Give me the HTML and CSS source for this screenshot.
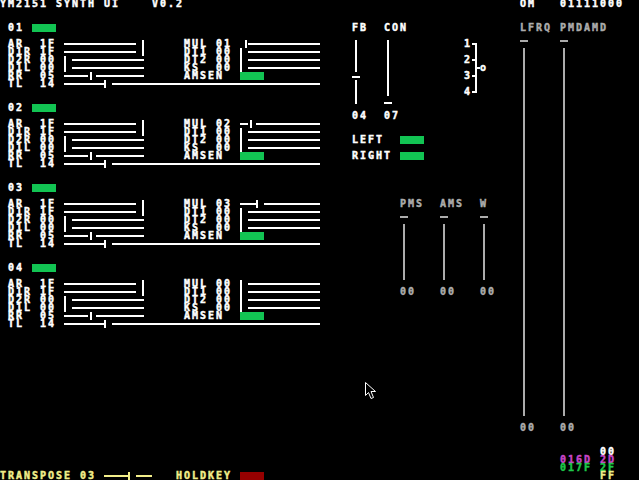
FILE: index.html
```html
<!DOCTYPE html>
<html lang="en">
<head>
	<meta charset="UTF-8">
	<title>YM2151 SYNTH UI</title>
	<link rel="stylesheet" href="styles.css">
</head>
<body>
	<div class="screen">
		<div class="title">YM2151 SYNTH UI    V0.2</div>

		<!-- operators -->
		<div class="ops">
			<div class="op">
				<div class="op-head"><span class="num">01</span><span class="led"></span></div>
				<div class="params">
					<span class="lbl">AR</span><span>1F</span>
					<div class="hs a"><i class="trk" style="width:72px"></i><b class="cell"><i class="knob" style="margin-left:6px"></i></b><i class="trk rest"></i></div>
					<span class="lbl b">MUL</span><span>01</span>
					<div class="hs b"><i class="trk" style="width:0px"></i><b class="cell"><i class="knob" style="margin-left:5px"></i></b><i class="trk rest"></i></div>

					<span class="lbl">D1R</span><span>1F</span>
					<div class="hs a"><i class="trk" style="width:72px"></i><b class="cell"><i class="knob" style="margin-left:6px"></i></b><i class="trk rest"></i></div>
					<span class="lbl b">DT1</span><span>00</span>
					<div class="hs b"><i class="trk" style="width:0px"></i><b class="cell"><i class="knob"></i></b><i class="trk rest"></i></div>

					<span class="lbl">D2R</span><span>00</span>
					<div class="hs a"><i class="trk" style="width:0px"></i><b class="cell"><i class="knob"></i></b><i class="trk rest"></i></div>
					<span class="lbl b">DT2</span><span>00</span>
					<div class="hs b"><i class="trk" style="width:0px"></i><b class="cell"><i class="knob"></i></b><i class="trk rest"></i></div>

					<span class="lbl">D1L</span><span>00</span>
					<div class="hs a"><i class="trk" style="width:0px"></i><b class="cell"><i class="knob"></i></b><i class="trk rest"></i></div>
					<span class="lbl b">KS</span><span>00</span>
					<div class="hs b"><i class="trk" style="width:0px"></i><b class="cell"><i class="knob"></i></b><i class="trk rest"></i></div>

					<span class="lbl">RR</span><span>05</span>
					<div class="hs a"><i class="trk" style="width:24px"></i><b class="cell"><i class="knob" style="margin-left:2px"></i></b><i class="trk rest"></i></div>
					<span class="lbl amsen">AMSEN</span><span class="led"></span>

					<span class="lbl">TL</span><span>14</span>
					<div class="hs wide"><i class="trk" style="width:40px"></i><b class="cell"><i class="knob"></i></b><i class="trk rest"></i></div>
				</div>
			</div>

			<div class="op">
				<div class="op-head"><span class="num">02</span><span class="led"></span></div>
				<div class="params">
					<span class="lbl">AR</span><span>1F</span>
					<div class="hs a"><i class="trk" style="width:72px"></i><b class="cell"><i class="knob" style="margin-left:6px"></i></b><i class="trk rest"></i></div>
					<span class="lbl b">MUL</span><span>02</span>
					<div class="hs b"><i class="trk" style="width:8px"></i><b class="cell"><i class="knob" style="margin-left:2px"></i></b><i class="trk rest"></i></div>

					<span class="lbl">D1R</span><span>1F</span>
					<div class="hs a"><i class="trk" style="width:72px"></i><b class="cell"><i class="knob" style="margin-left:6px"></i></b><i class="trk rest"></i></div>
					<span class="lbl b">DT1</span><span>00</span>
					<div class="hs b"><i class="trk" style="width:0px"></i><b class="cell"><i class="knob"></i></b><i class="trk rest"></i></div>

					<span class="lbl">D2R</span><span>00</span>
					<div class="hs a"><i class="trk" style="width:0px"></i><b class="cell"><i class="knob"></i></b><i class="trk rest"></i></div>
					<span class="lbl b">DT2</span><span>00</span>
					<div class="hs b"><i class="trk" style="width:0px"></i><b class="cell"><i class="knob"></i></b><i class="trk rest"></i></div>

					<span class="lbl">D1L</span><span>00</span>
					<div class="hs a"><i class="trk" style="width:0px"></i><b class="cell"><i class="knob"></i></b><i class="trk rest"></i></div>
					<span class="lbl b">KS</span><span>00</span>
					<div class="hs b"><i class="trk" style="width:0px"></i><b class="cell"><i class="knob"></i></b><i class="trk rest"></i></div>

					<span class="lbl">RR</span><span>05</span>
					<div class="hs a"><i class="trk" style="width:24px"></i><b class="cell"><i class="knob" style="margin-left:2px"></i></b><i class="trk rest"></i></div>
					<span class="lbl amsen">AMSEN</span><span class="led"></span>

					<span class="lbl">TL</span><span>14</span>
					<div class="hs wide"><i class="trk" style="width:40px"></i><b class="cell"><i class="knob"></i></b><i class="trk rest"></i></div>
				</div>
			</div>

			<div class="op">
				<div class="op-head"><span class="num">03</span><span class="led"></span></div>
				<div class="params">
					<span class="lbl">AR</span><span>1F</span>
					<div class="hs a"><i class="trk" style="width:72px"></i><b class="cell"><i class="knob" style="margin-left:6px"></i></b><i class="trk rest"></i></div>
					<span class="lbl b">MUL</span><span>03</span>
					<div class="hs b"><i class="trk" style="width:16px"></i><b class="cell"><i class="knob"></i></b><i class="trk rest"></i></div>

					<span class="lbl">D1R</span><span>1F</span>
					<div class="hs a"><i class="trk" style="width:72px"></i><b class="cell"><i class="knob" style="margin-left:6px"></i></b><i class="trk rest"></i></div>
					<span class="lbl b">DT1</span><span>00</span>
					<div class="hs b"><i class="trk" style="width:0px"></i><b class="cell"><i class="knob"></i></b><i class="trk rest"></i></div>

					<span class="lbl">D2R</span><span>00</span>
					<div class="hs a"><i class="trk" style="width:0px"></i><b class="cell"><i class="knob"></i></b><i class="trk rest"></i></div>
					<span class="lbl b">DT2</span><span>00</span>
					<div class="hs b"><i class="trk" style="width:0px"></i><b class="cell"><i class="knob"></i></b><i class="trk rest"></i></div>

					<span class="lbl">D1L</span><span>00</span>
					<div class="hs a"><i class="trk" style="width:0px"></i><b class="cell"><i class="knob"></i></b><i class="trk rest"></i></div>
					<span class="lbl b">KS</span><span>00</span>
					<div class="hs b"><i class="trk" style="width:0px"></i><b class="cell"><i class="knob"></i></b><i class="trk rest"></i></div>

					<span class="lbl">RR</span><span>05</span>
					<div class="hs a"><i class="trk" style="width:24px"></i><b class="cell"><i class="knob" style="margin-left:2px"></i></b><i class="trk rest"></i></div>
					<span class="lbl amsen">AMSEN</span><span class="led"></span>

					<span class="lbl">TL</span><span>14</span>
					<div class="hs wide"><i class="trk" style="width:40px"></i><b class="cell"><i class="knob"></i></b><i class="trk rest"></i></div>
				</div>
			</div>

			<div class="op">
				<div class="op-head"><span class="num">04</span><span class="led"></span></div>
				<div class="params">
					<span class="lbl">AR</span><span>1F</span>
					<div class="hs a"><i class="trk" style="width:72px"></i><b class="cell"><i class="knob" style="margin-left:6px"></i></b><i class="trk rest"></i></div>
					<span class="lbl b">MUL</span><span>00</span>
					<div class="hs b"><i class="trk" style="width:0px"></i><b class="cell"><i class="knob"></i></b><i class="trk rest"></i></div>

					<span class="lbl">D1R</span><span>1F</span>
					<div class="hs a"><i class="trk" style="width:72px"></i><b class="cell"><i class="knob" style="margin-left:6px"></i></b><i class="trk rest"></i></div>
					<span class="lbl b">DT1</span><span>00</span>
					<div class="hs b"><i class="trk" style="width:0px"></i><b class="cell"><i class="knob"></i></b><i class="trk rest"></i></div>

					<span class="lbl">D2R</span><span>00</span>
					<div class="hs a"><i class="trk" style="width:0px"></i><b class="cell"><i class="knob"></i></b><i class="trk rest"></i></div>
					<span class="lbl b">DT2</span><span>00</span>
					<div class="hs b"><i class="trk" style="width:0px"></i><b class="cell"><i class="knob"></i></b><i class="trk rest"></i></div>

					<span class="lbl">D1L</span><span>00</span>
					<div class="hs a"><i class="trk" style="width:0px"></i><b class="cell"><i class="knob"></i></b><i class="trk rest"></i></div>
					<span class="lbl b">KS</span><span>00</span>
					<div class="hs b"><i class="trk" style="width:0px"></i><b class="cell"><i class="knob"></i></b><i class="trk rest"></i></div>

					<span class="lbl">RR</span><span>05</span>
					<div class="hs a"><i class="trk" style="width:24px"></i><b class="cell"><i class="knob" style="margin-left:2px"></i></b><i class="trk rest"></i></div>
					<span class="lbl amsen">AMSEN</span><span class="led"></span>

					<span class="lbl">TL</span><span>14</span>
					<div class="hs wide"><i class="trk" style="width:40px"></i><b class="cell"><i class="knob"></i></b><i class="trk rest"></i></div>
				</div>
			</div>
		</div>

		<!-- feedback / connection -->
		<div class="fbcon">
			<div class="meter">
				<span>FB</span>
				<div class="vs short"><i class="vtrk" style="height:32px"></i><b class="vcell"><i class="vknob" style="margin-top:4px"></i></b><i class="vtrk rest"></i></div>
				<span>04</span>
			</div>
			<div class="meter">
				<span>CON</span>
				<div class="vs short"><i class="vtrk" style="height:56px"></i><b class="vcell"><i class="vknob" style="margin-top:6px"></i></b><i class="vtrk rest"></i></div>
				<span>07</span>
			</div>
		</div>

		<!-- algorithm -->
		<div class="alg">
			<div class="alg-nums"><span>1</span><span>2</span><span>3</span><span>4</span></div>
			<svg class="alg-lines" width="8" height="56" viewBox="0 0 8 56">
				<rect x="0" y="3" width="5" height="2" fill="#fff"/>
				<rect x="0" y="19" width="5" height="2" fill="#fff"/>
				<rect x="0" y="35" width="5" height="2" fill="#fff"/>
				<rect x="0" y="51" width="5" height="2" fill="#fff"/>
				<rect x="3" y="3" width="2" height="50" fill="#fff"/>
				<rect x="5" y="27" width="3" height="2" fill="#fff"/>
			</svg>
			<span class="alg-out">o</span>
		</div>

		<div class="chan">
			<div class="chan-row"><span class="chan-lbl">LEFT</span><span class="led"></span></div>
			<div class="chan-row"><span class="chan-lbl">RIGHT</span><span class="led"></span></div>
		</div>

		<!-- lfo -->
		<div class="lfo gray">
			<div class="meter wide-col">
				<span>PMS</span>
				<div class="vs short"><i class="vtrk" style="height:0px"></i><b class="vcell"><i class="vknob"></i></b><i class="vtrk rest"></i></div>
				<span>00</span>
			</div>
			<div class="meter wide-col">
				<span>AMS</span>
				<div class="vs short"><i class="vtrk" style="height:0px"></i><b class="vcell"><i class="vknob"></i></b><i class="vtrk rest"></i></div>
				<span>00</span>
			</div>
			<div class="meter wide-col">
				<span>W</span>
				<div class="vs short"><i class="vtrk" style="height:0px"></i><b class="vcell"><i class="vknob"></i></b><i class="vtrk rest"></i></div>
				<span>00</span>
			</div>
		</div>

		<div class="om"><span class="om-lbl">OM</span><span>01111000</span></div>

		<div class="lfrq gray">
			<div class="meter wide-col">
				<span>LFRQ</span>
				<div class="vs tall"><i class="vtrk" style="height:0px"></i><b class="vcell"><i class="vknob"></i></b><i class="vtrk rest"></i></div>
				<span>00</span>
			</div>
			<div class="meter wide-col">
				<span>PMDAMD</span>
				<div class="vs tall"><i class="vtrk" style="height:0px"></i><b class="vcell"><i class="vknob"></i></b><i class="vtrk rest"></i></div>
				<span>00</span>
			</div>
		</div>

		<div class="hex">
			<span></span><span>00</span>
			<span class="mag">016D</span><span class="mag">2D</span>
			<span class="grn">017F</span><span class="grn">2F</span>
			<span></span><span class="yel">FF</span>
		</div>

		<!-- bottom bar -->
		<div class="bottom">
			<span class="tr-lbl">TRANSPOSE 03</span>
			<div class="hs tr"><i class="trk" style="width:24px"></i><b class="cell"><i class="knob"></i></b><i class="trk rest"></i></div>
			<span class="hk-lbl">HOLDKEY</span>
			<span class="hold"></span>
		</div>

		<svg class="cursor" width="12" height="20" viewBox="0 0 12 20">
			<path d="M0.5 0.5 V13.5 L3.5 10.5 L6 16.5 L8.5 15.5 L6 9.5 H10.5 Z" fill="#000" stroke="#fff" stroke-width="1"/>
		</svg>
	</div>
</body>
</html>
```

FILE: styles.css
```css
* {
	margin: 0;
	padding: 0;
	box-sizing: border-box;
}

body {
	background-color: #000;
	overflow: hidden;
}

/* the whole ui sits on an 8x8 character grid */
.screen {
	width: 640px;
	height: 480px;
	position: relative;
	display: grid;
	grid-template-columns: repeat(80, 8px);
	grid-template-rows: repeat(60, 8px);
	font-family: "DejaVu Sans Mono", "Liberation Mono", monospace;
	font-weight: bold;
	font-size: 10px;
	letter-spacing: 1.98px;
	line-height: 8px;
	color: #fff;
	white-space: pre;
	-webkit-text-stroke: 0.45px currentColor;
}

.screen > * {
	align-self: start;
	justify-self: start;
}

.gray { color: #acacac; }
.mag { color: #c846c8; }
.grn { color: #1ec84a; }
.yel { color: #f2ee8a; }

.led {
	display: block;
	width: 24px;
	height: 8px;
	background-color: #12c453;
}

.title { grid-area: 1 / 1 / 2 / 40; }

/* operators */
.ops {
	grid-area: 4 / 2 / 60 / 42;
	display: flex;
	flex-direction: column;
	gap: 16px;
}

.op {
	display: flex;
	flex-direction: column;
	gap: 8px;
}

.op-head {
	display: flex;
	gap: 8px;
	height: 8px;
}

.params {
	display: grid;
	grid-template-columns: 32px 16px 8px 80px 40px 32px 16px 8px 80px;
	grid-auto-rows: 8px;
}

.hs.a { grid-column: 4; }
.lbl.b { grid-column: 6; }
.hs.b { grid-column: 9; }
.hs.wide { grid-column: 4 / 10; }
.lbl.amsen { grid-column: 6 / 9; }

/* horizontal slider */
.hs {
	display: flex;
	height: 8px;
}

.trk {
	display: block;
	flex: none;
	height: 2px;
	margin-top: 3px;
	background-color: currentColor;
}

.trk.rest { flex: 1; }

.cell {
	display: block;
	flex: none;
	width: 8px;
}

.knob {
	display: block;
	width: 2px;
	height: 8px;
	background-color: currentColor;
}

/* vertical slider */
.vs {
	display: flex;
	flex-direction: column;
	width: 8px;
}

.vs.short { height: 64px; }
.vs.tall { height: 376px; }

.vtrk {
	display: block;
	flex: none;
	width: 2px;
	margin-left: 3px;
	background-color: currentColor;
}

.vtrk.rest { flex: 1; }

.vcell {
	display: block;
	flex: none;
	height: 8px;
}

.vknob {
	display: block;
	width: 8px;
	height: 2px;
	background-color: currentColor;
}

.meter {
	display: flex;
	flex-direction: column;
	gap: 8px;
	width: 32px;
}

.meter.wide-col { width: 40px; }

.fbcon {
	grid-area: 4 / 45 / 17 / 61;
	display: flex;
}

/* algorithm diagram */
.alg {
	grid-area: 6 / 59 / 13 / 66;
	display: flex;
}

.alg-nums {
	display: flex;
	flex-direction: column;
	gap: 8px;
	width: 8px;
}

.alg-lines { display: block; }

.alg-out { margin-top: 24px; }

.chan {
	grid-area: 18 / 45 / 22 / 60;
	display: flex;
	flex-direction: column;
	gap: 8px;
}

.chan-row { display: flex; }
.chan-lbl { width: 48px; }

.lfo {
	grid-area: 26 / 51 / 38 / 66;
	display: flex;
}

.om {
	grid-area: 1 / 66 / 2 / 81;
	display: flex;
}

.om-lbl { width: 40px; }

.lfrq {
	grid-area: 4 / 66 / 56 / 81;
	display: flex;
}

.hex {
	grid-area: 57 / 71 / 61 / 81;
	display: grid;
	grid-template-columns: 40px 16px;
	grid-auto-rows: 8px;
}

/* bottom bar */
.bottom {
	grid-area: 60 / 1 / 61 / 40;
	display: flex;
	color: #f2ee8a;
}

.tr-lbl { width: 104px; }
.hs.tr { width: 48px; margin-right: 24px; }
.hk-lbl { width: 64px; }

.hold {
	display: block;
	width: 24px;
	height: 8px;
	background-color: #960000;
}

.cursor {
	position: absolute;
	left: 365px;
	top: 382px;
}
```
